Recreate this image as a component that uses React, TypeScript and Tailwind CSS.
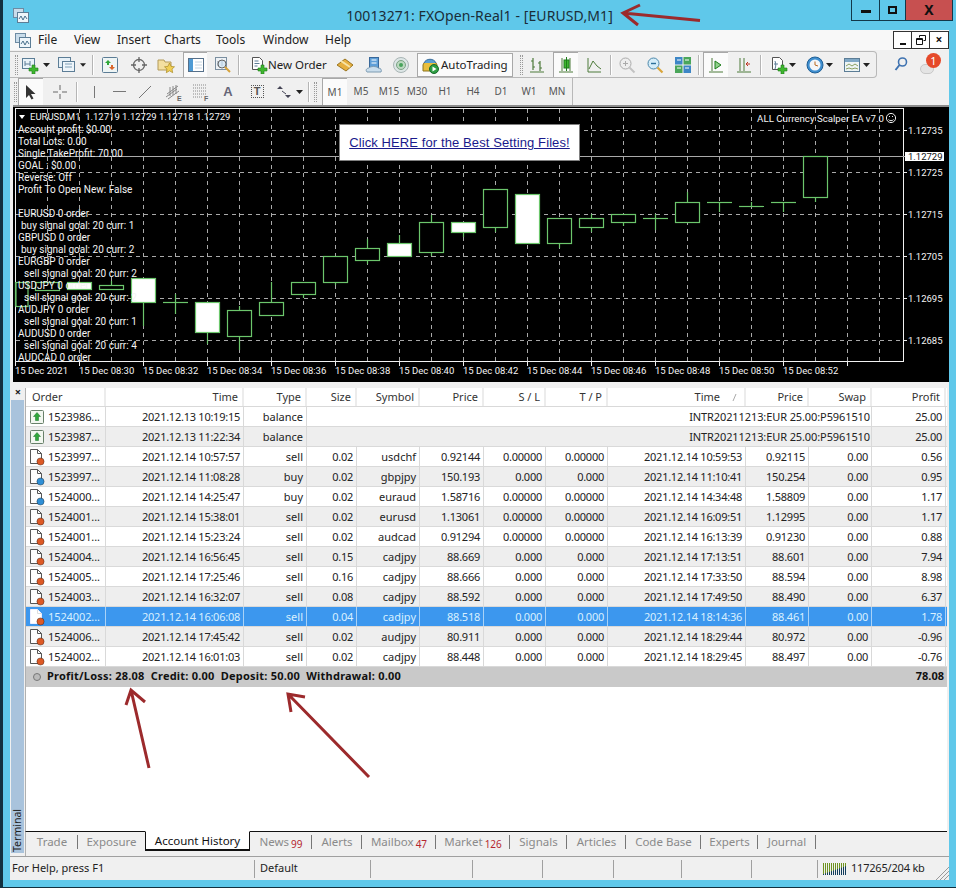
import { ReactNode } from "react";

const full = "grid grid-cols-[80px_138px_63px_50px_63px_64px_62px_62px_138px_63px_63px_74px]";
const balance = "grid grid-cols-[80px_138px_63px_565px_74px]";

const rows = [
  ["1523986...", "2021.12.13 10:19:15", "balance", "INTR20211213:EUR 25.00:P5961510", "25.00"],
  ["1523987...", "2021.12.13 11:22:34", "balance", "INTR20211213:EUR 25.00:P5961510", "25.00"],
  ["1523997...", "2021.12.14 10:57:57", "sell", "0.02", "usdchf", "0.92144", "0.00000", "0.00000", "2021.12.14 10:59:53", "0.92115", "0.00", "0.56"],
  ["1523997...", "2021.12.14 11:08:28", "buy", "0.02", "gbpjpy", "150.193", "0.000", "0.000", "2021.12.14 11:10:41", "150.254", "0.00", "0.95"],
  ["1524000...", "2021.12.14 14:25:47", "buy", "0.02", "euraud", "1.58716", "0.00000", "0.00000", "2021.12.14 14:34:48", "1.58809", "0.00", "1.17"],
  ["1524001...", "2021.12.14 15:38:01", "sell", "0.02", "eurusd", "1.13061", "0.00000", "0.00000", "2021.12.14 16:09:51", "1.12995", "0.00", "1.17"],
  ["1524001...", "2021.12.14 15:23:24", "sell", "0.02", "audcad", "0.91294", "0.00000", "0.00000", "2021.12.14 16:13:39", "0.91230", "0.00", "0.88"],
  ["1524004...", "2021.12.14 16:56:45", "sell", "0.15", "cadjpy", "88.669", "0.000", "0.000", "2021.12.14 17:13:51", "88.601", "0.00", "7.94"],
  ["1524005...", "2021.12.14 17:25:46", "sell", "0.16", "cadjpy", "88.666", "0.000", "0.000", "2021.12.14 17:33:50", "88.594", "0.00", "8.98"],
  ["1524003...", "2021.12.14 16:32:07", "sell", "0.08", "cadjpy", "88.592", "0.000", "0.000", "2021.12.14 17:49:50", "88.490", "0.00", "6.37"],
  ["1524002...", "2021.12.14 16:06:08", "sell", "0.04", "cadjpy", "88.518", "0.000", "0.000", "2021.12.14 18:14:36", "88.461", "0.00", "1.78"],
  ["1524006...", "2021.12.14 17:45:42", "sell", "0.02", "audjpy", "80.911", "0.000", "0.000", "2021.12.14 18:29:44", "80.972", "0.00", "-0.96"],
  ["1524002...", "2021.12.14 16:01:03", "sell", "0.02", "cadjpy", "88.448", "0.000", "0.000", "2021.12.14 18:29:45", "88.497", "0.00", "-0.76"],
];

const headers = ["Order", "Time", "Type", "Size", "Symbol", "Price", "S / L", "T / P", "Time", "Price", "Swap", "Profit"];

// x, body top, body bottom, wick top, wick bottom, white body
const candles: [number, number, number, number, number, boolean][] = [
  [15, 282, 306, 282, 306, false],
  [47, 282, 290, 282, 290, false],
  [79, 282, 289, 282, 289, true],
  [111, 285, 289, 281, 289, false],
  [143, 278, 302, 278, 326, true],
  [175, 302, 302, 294, 314, false],
  [207, 302, 332, 302, 344, true],
  [239, 310, 336, 306, 350, false],
  [271, 302, 315, 282, 315, false],
  [303, 282, 294, 282, 298, false],
  [335, 256, 282, 256, 285, false],
  [367, 248, 260, 239, 264, false],
  [399, 243, 256, 235, 256, true],
  [431, 222, 252, 215, 256, false],
  [463, 222, 232, 222, 237, true],
  [495, 189, 227, 189, 232, false],
  [527, 194, 243, 194, 243, true],
  [559, 218, 243, 218, 248, false],
  [591, 218, 227, 214, 232, false],
  [623, 214, 222, 214, 226, false],
  [655, 218, 218, 214, 230, false],
  [687, 202, 222, 192, 222, false],
  [719, 202, 202, 202, 212, false],
  [751, 206, 206, 202, 206, false],
  [783, 202, 202, 202, 212, false],
  [815, 156, 197, 156, 202, false],
];

const gridX = Array.from({ length: 28 }, (_, i) => 15 + i * 32);
const prices = [
  ["1.12735", 130],
  ["1.12725", 172],
  ["1.12715", 214],
  ["1.12705", 256],
  ["1.12695", 298],
  ["1.12685", 340],
] as const;
const times = ["08:30", "08:32", "08:34", "08:36", "08:38", "08:40", "08:42", "08:44", "08:46", "08:48", "08:50", "08:52"];

const chartLines = [
  ["Account profit: $0.00", "pl-0"],
  ["Total Lots: 0.00", "pl-0"],
  ["Single TakeProfit: 70.00", "pl-0"],
  ["GOAL : $0.00", "pl-0"],
  ["Reverse: Off", "pl-0"],
  ["Profit To Open New: False", "pl-0"],
  ["\u00a0", "pl-0"],
  ["EURUSD 0 order", "pl-0"],
  ["buy signal goal: 20 curr: 1", "pl-[3px]"],
  ["GBPUSD 0 order", "pl-0"],
  ["buy signal goal: 20 curr: 2", "pl-[3px]"],
  ["EURGBP 0 order", "pl-0"],
  ["sell signal goal: 20 curr: 2", "pl-[6px]"],
  ["USDJPY 0 order", "pl-0"],
  ["sell signal goal: 20 curr: 2", "pl-[6px]"],
  ["AUDJPY 0 order", "pl-0"],
  ["sell signal goal: 20 curr: 1", "pl-[6px]"],
  ["AUDUSD 0 order", "pl-0"],
  ["sell signal goal: 20 curr: 4", "pl-[6px]"],
  ["AUDCAD 0 order", "pl-0"],
];

const tabs = [
  ["Trade", "", "w-[52px]"],
  ["Exposure", "", "w-[67px]"],
  ["Account History", "", "w-[105px]"],
  ["News", "99", "w-[62px]"],
  ["Alerts", "", "w-[50px]"],
  ["Mailbox", "47", "w-[74px]"],
  ["Market", "126", "w-[74px]"],
  ["Signals", "", "w-[57px]"],
  ["Articles", "", "w-[59px]"],
  ["Code Base", "", "w-[75px]"],
  ["Experts", "", "w-[57px]"],
  ["Journal", "", "w-[58px]"],
];

function Slot({ w, active, children }: { w: string; active?: boolean; children?: ReactNode }) {
  return (
    <div className={`${w} shrink-0 h-full flex items-center justify-center ${active ? "bg-[#fbfbfb] border-t border-l border-[#a8a8a8]" : ""}`}>
      {children}
    </div>
  );
}

function Ico({ children, s = 18 }: { children: ReactNode; s?: number }) {
  return (
    <svg width={s} height={s} viewBox="0 0 18 18" className="shrink-0">
      {children}
    </svg>
  );
}

function Arrow() {
  return (
    <svg width="7" height="4" viewBox="0 0 7 4">
      <path d="M0 0h7L3.5 4z" fill="#222" />
    </svg>
  );
}

function Sep() {
  return <div className="w-[2px] h-[20px] border-l border-[#b5b5b5] bg-white shrink-0" />;
}

function Grip() {
  return <div className="w-[3px] h-[20px] ml-[3px] border-x border-dotted border-[#999] shrink-0" />;
}

function Plus() {
  return <path d="M11 9h3v3h3v3h-3v3h-3v-3H8v-3h3z" fill="#3fb62f" stroke="#1d7d1a" strokeWidth=".6" />;
}

function AppIcon() {
  return (
    <svg width="16" height="15" viewBox="0 0 16 15" className="shrink-0">
      <rect x="0.5" y="0.5" width="10" height="9" fill="#c9dcea" stroke="#6d8ba3" />
      <rect x="4.5" y="4.5" width="11" height="10" fill="#eef5fa" stroke="#5c7d96" />
      <path d="M6 11l2-3 2 4 2-4 2 3" fill="none" stroke="#49708c" />
    </svg>
  );
}

function DocIcon({ color, light }: { color: string; light?: boolean }) {
  return (
    <svg width="16" height="18" viewBox="0 0 16 18" className="shrink-0">
      <path d="M1.5 1.5h7l4 4v10h-11z" fill={light ? "#fff" : "#fdfdfd"} stroke={light ? "#eef" : "#555"} />
      <path d="M8.5 1.5v4h4" fill="none" stroke={light ? "#ddd" : "#555"} />
      <circle cx="11.5" cy="13.5" r="3.6" fill={color} stroke="#00000055" />
    </svg>
  );
}

function BalanceIcon() {
  return (
    <svg width="14" height="14" viewBox="0 0 14 14" className="shrink-0">
      <rect x=".5" y=".5" width="13" height="13" rx="1" fill="#f2f7f0" stroke="#68806a" />
      <path d="M7 2.5l3.5 4H8.5v4h-3v-4H3.5z" fill="#2fa83a" stroke="#177024" strokeWidth=".5" />
    </svg>
  );
}

function CellText({ children, sel }: { children: ReactNode; sel?: boolean }) {
  const numeric = typeof children === "string" && /^-?\d/.test(children);
  const comment = typeof children === "string" && children.startsWith("INTR");
  return (
    <div
      className={`h-full flex items-center justify-end pt-px whitespace-nowrap overflow-hidden ${comment ? "pr-px tracking-[-0.1px]" : "pr-[3px]"} ${numeric ? "tracking-[-0.25px]" : ""} ${
        sel ? "border-r border-[#a9d2f7]" : "border-r border-[#d9d9d9]"
      }`}
    >
      {children}
    </div>
  );
}

function HeadCell({ children, left }: { children: ReactNode; left?: boolean }) {
  return (
    <div className={`h-full flex items-center whitespace-nowrap overflow-hidden border-r-2 border-[#ececec] ${left ? "pl-[6px]" : "justify-end pr-[4px]"}`}>
      {children}
    </div>
  );
}

function Row({ row, index }: { row: string[]; index: number }) {
  const sel = index === 10;
  const isBalance = row.length === 5;
  const rowBg = sel ? "bg-[#3c97ee] text-[#d9f0ff]" : index % 2 ? "bg-[#eeeeee]" : "bg-white";
  const buy = row[2] === "buy";
  return (
    <div className={`${isBalance ? balance : full} h-[20px] border-b border-[#d9d9d9] shrink-0 ${rowBg}`}>
      <div className={`h-full flex items-center gap-[3px] pl-[3px] whitespace-nowrap border-r ${sel ? "border-[#a9d2f7]" : "border-[#d9d9d9]"}`}>
        {isBalance ? (
          <span className="w-[16px] pl-[1px]">
            <BalanceIcon />
          </span>
        ) : (
          <DocIcon color={buy ? "#2f8fd6" : "#dd5a26"} light={sel} />
        )}
        <span className="pt-px tracking-[-0.1px]">{row[0]}</span>
      </div>
      {row.slice(1).map((c, i) => (
        <CellText key={i} sel={sel}>
          {c}
        </CellText>
      ))}
    </div>
  );
}

function Chart() {
  return (
    <div className="relative h-[277px] bg-[#f0f0f0] pl-[3px] shrink-0">
      <div className="relative h-full bg-black border-t-2 border-[#8c8c8c] overflow-hidden font-['Roboto',sans-serif] text-[10px]">
        <svg width="937" height="277" viewBox="13 105 937 277" className="absolute left-0 -top-[2px]">
          <rect x="15.5" y="108.5" width="888" height="253" fill="none" stroke="#f2f2f2" />
          {gridX.filter((x) => x > 15 && x < 903).map((x) => (
            <line key={x} x1={x + 0.5} x2={x + 0.5} y1="109" y2="361" stroke="#a9a9a9" strokeDasharray="4 4" />
          ))}
          {prices.map(([p, y]) => (
            <g key={p}>
              <line x1="16" x2="903" y1={y + 0.5} y2={y + 0.5} stroke="#a9a9a9" strokeDasharray="4 4" />
              <line x1="903" x2="907" y1={y + 0.5} y2={y + 0.5} stroke="#eee" />
              <text x="908" y={y + 4} fill="#f4f4f4" fontSize="9.5" fontFamily="Roboto, sans-serif">
                {p}
              </text>
            </g>
          ))}
          <line x1="16" x2="905" y1="156.5" y2="156.5" stroke="#a9a9a9" />
          {candles.map(([x, top, bottom, wt, wb, white]) => (
            <g key={x} stroke="#6cc66c" strokeWidth="1.2">
              <line x1={x + 0.5} x2={x + 0.5} y1={wt} y2={wb} />
              {top === bottom ? (
                <line x1={x - 12} x2={x + 13} y1={top + 0.5} y2={top + 0.5} />
              ) : (
                <rect x={Math.max(x - 11.5, 16)} y={top + 0.5} width={x === 15 ? 12 : 24} height={bottom - top} fill={white ? "#fff" : "#000"} />
              )}
            </g>
          ))}
          <rect x="905" y="152" width="39" height="9" fill="#fff" />
          <text x="908" y="160" fill="#111" fontSize="9.5" fontFamily="Roboto, sans-serif">
            1.12729
          </text>
          {gridX.filter((x) => (x - 15) % 64 === 0 && x < 903).map((x) => (
            <line key={x} x1={x + 0.5} x2={x + 0.5} y1="361" y2="366" stroke="#eee" />
          ))}
          <text x="15" y="374" fill="#f4f4f4" fontSize="9.5" fontFamily="Roboto, sans-serif">
            15 Dec 2021
          </text>
          {times.map((t, i) => (
            <text key={t} x={79 + i * 64} y="374" fill="#f4f4f4" fontSize="9.5" fontFamily="Roboto, sans-serif">
              15 Dec {t}
            </text>
          ))}
          <circle cx="891" cy="118" r="4.6" fill="none" stroke="#eee" />
          <path d="M888.5 119.5c1 1.6 4 1.6 5 0M889 116.5h1M892 116.5h1" fill="none" stroke="#eee" />
        </svg>
        <div className="absolute left-[6px] top-[4px] flex items-center gap-[5px] text-[#f4f4f4] text-[9.5px] whitespace-nowrap leading-[12px]">
          <svg width="6" height="4" viewBox="0 0 6 4">
            <path d="M0 0h6L3 4z" fill="#fff" />
          </svg>
          <span>EURUSD,M1&nbsp; 1.12719 1.12729 1.12718 1.12729</span>
        </div>
        <div className="absolute right-[65px] top-[6px] text-[#f4f4f4] text-[9.7px] whitespace-nowrap leading-[12px]">ALL Currency Scalper EA v7.0</div>
        <div className="absolute left-[5px] top-[17px] flex flex-col text-[#f4f4f4] leading-[12px] whitespace-nowrap">
          {chartLines.map(([l, p], i) => (
            <div key={i} className={`h-[12px] ${p}`}>
              {l}
            </div>
          ))}
        </div>
        <div className="absolute left-[326px] top-[17px] w-[241px] h-[37px] bg-white border border-[#808080] flex items-center justify-center">
          <a href="#" className="font-['Liberation_Sans',sans-serif] text-[13px] tracking-[0.1px] text-[#1a1a8c] underline whitespace-nowrap">
            Click HERE for the Best Setting Files!
          </a>
        </div>
      </div>
    </div>
  );
}

function ToolbarTop() {
  return (
    <div className="flex items-end h-[28px] bg-[#f0f0f0] shrink-0">
      <div className="flex items-center h-[27px] w-[867px] border-y border-r border-[#b8b8b8] rounded-r-sm">
        <Slot w="w-[10px]"><Grip /></Slot>
        <Slot w="w-[19px]">
          <Ico><rect x="1.5" y="2.5" width="12" height="10" fill="#e9f3f9" stroke="#5c7d96" /><path d="M4 5v5M4 8h5M9 5v5" stroke="#5c7d96" fill="none" /><Plus /></Ico>
        </Slot>
        <Slot w="w-[14px]"><Arrow /></Slot>
        <Slot w="w-[27px]">
          <Ico><rect x=".5" y="1.5" width="12" height="10" fill="#e6f0f7" stroke="#5c7d96" /><rect x="4.5" y="5.5" width="12" height="10" fill="#eef5fa" stroke="#5c7d96" /><path d="M7 8h7M7 11h7" stroke="#7fa0b8" /></Ico>
        </Slot>
        <Slot w="w-[6px]"><Arrow /></Slot>
        <Slot w="w-[14px]"><Sep /></Slot>
        <Slot w="w-[20px]">
          <Ico><rect x="1.5" y="1.5" width="15" height="15" rx="1" fill="#eef5f5" stroke="#5c7d96" /><path d="M7 4l3 3H8v2H6V7H4z" fill="#2fa83a" /><path d="M11 14l-3-3h2V9h2v2h2z" fill="#d9682d" /></Ico>
        </Slot>
        <Slot w="w-[38px]">
          <Ico><circle cx="9" cy="9" r="5.5" fill="none" stroke="#666" strokeWidth="1.3" /><path d="M9 1v5M9 12v5M1 9h5M12 9h5" stroke="#666" strokeWidth="1.3" /></Ico>
        </Slot>
        <Slot w="w-[16px]">
          <Ico><path d="M1 4h6l1 2h6v8H1z" fill="#f3dfa0" stroke="#b39a58" /><path d="M12.5 7l1.6 3.4 3.4.4-2.5 2.3.7 3.6-3.2-1.9-3.2 1.9.7-3.6-2.5-2.3 3.4-.4z" fill="#f0cf55" stroke="#a98a22" strokeWidth=".7" /></Ico>
        </Slot>
        <Slot w="w-[9px]" />
        <Slot w="w-[24px]" active>
          <Ico><rect x="1.5" y="2.5" width="15" height="13" fill="#fff" stroke="#56708a" /><rect x="2" y="3" width="4" height="12" fill="#4f9bd4" /><path d="M8 6h7M8 9h7M8 12h7" stroke="#c4d4e0" /></Ico>
        </Slot>
        <Slot w="w-[31px]">
          <Ico><rect x="1.5" y="1.5" width="11" height="12" fill="#eef2f6" stroke="#7b8fa0" /><path d="M4 5v5M8 4v6" stroke="#7b8fa0" /><circle cx="8" cy="8" r="4" fill="#cfe4f3" fillOpacity=".7" stroke="#666" /><path d="M11 11l5 5" stroke="#d6a23a" strokeWidth="2" /></Ico>
        </Slot>
        <Sep />
        <Slot w="w-[10px]" />
        <Slot w="w-[18px]">
          <Ico><path d="M2.5 1.5h7l3 3v9h-10z" fill="#fff" stroke="#555" /><path d="M4.5 5h4M4.5 7.5h5M4.5 10h3" stroke="#5c7d96" /><Plus /></Ico>
        </Slot>
        <div className="w-[69px] shrink-0 text-[11.5px] text-[#222] whitespace-nowrap">New Order</div>
        <Slot w="w-[16px]">
          <Ico><path d="M9 3l8 6-7 6-9-6z" fill="#e7b040" stroke="#9a7520" /><path d="M5 5l9 6" stroke="#f7e4a6" strokeWidth="2" /></Ico>
        </Slot>
        <Slot w="w-[12px]" />
        <Slot w="w-[17px]">
          <Ico><rect x="4.5" y="1.5" width="9" height="10" fill="#5f9fd8" stroke="#39689a" /><path d="M6.5 4h5M6.5 7h5" stroke="#fff" /><path d="M2 16c-2-2 0-4 2-4 1-2 8-2 9 0 3 0 4 2 3 4z" fill="#c9ddec" stroke="#7d9bb2" /></Ico>
        </Slot>
        <Slot w="w-[11px]" />
        <Slot w="w-[16px]">
          <Ico><circle cx="9" cy="9" r="7.5" fill="#dde6e6" stroke="#a9b5b5" /><circle cx="9" cy="9" r="4.5" fill="#bcd8c0" stroke="#7ba384" /><circle cx="9" cy="9" r="2" fill="#46a35a" /></Ico>
        </Slot>
        <Slot w="w-[8px]" />
        <div className="w-[96px] shrink-0 h-[24px] bg-[#fbfbfb] border border-[#a8a8a8] flex items-center gap-[2px] pl-[3px] text-[11.5px] text-[#222] whitespace-nowrap">
          <Ico><path d="M2 9c0-5 14-5 14 0v6H2z" fill="#e9bf3d" stroke="#8b7420" /><path d="M3 7c2-5 10-5 12 0" fill="#5a9fd4" stroke="#3a6d99" /><circle cx="13" cy="13" r="4.5" fill="#2f9e44" stroke="#176a2a" /><path d="M11.5 10.5l4 2.5-4 2.5z" fill="#fff" /></Ico>
          <span>AutoTrading</span>
        </div>
        <Slot w="w-[13px]"><Grip /></Slot>
        <Slot w="w-[22px]">
          <Ico><path d="M2 16h14M5 2v12M5 5H3M5 11h2M12 5v10M12 7h-2M12 12h2" stroke="#4d7a3a" strokeWidth="1.2" fill="none" /></Ico>
        </Slot>
        <Slot w="w-[5px]" />
        <Slot w="w-[25px]" active>
          <Ico><path d="M2 16h14M5 2v13M13 2v13" stroke="#4d7a3a" fill="none" /><rect x="7" y="4" width="5" height="8" fill="#3fb62f" stroke="#1d7d1a" /><path d="M9.5 1v14" stroke="#1d7d1a" /></Ico>
        </Slot>
        <Slot w="w-[32px]">
          <Ico><path d="M3 2v14h13" stroke="#4d7a3a" fill="none" /><path d="M4 13l4-8 4 5 4 3" stroke="#4d7a3a" fill="none" /></Ico>
        </Slot>
        <Sep />
        <Slot w="w-[30px]">
          <Ico><circle cx="7.5" cy="7.5" r="5.5" fill="#eee" stroke="#aaa" /><path d="M5 7.5h5M7.5 5v5" stroke="#aaa" /><path d="M11.5 11.5l5 5" stroke="#c2c2c2" strokeWidth="2" /></Ico>
        </Slot>
        <Slot w="w-[26px]">
          <Ico><circle cx="7.5" cy="7.5" r="5.5" fill="#d3ecf8" stroke="#4b87aa" /><path d="M5 7.5h5" stroke="#2a6f99" strokeWidth="1.4" /><path d="M11.5 11.5l5 5" stroke="#d9a53a" strokeWidth="2.2" /></Ico>
        </Slot>
        <Slot w="w-[30px]">
          <Ico><rect x="1" y="1" width="7.5" height="7.5" fill="#3d86c6" /><rect x="9.5" y="1" width="7.5" height="7.5" fill="#4aa65a" /><rect x="1" y="9.5" width="7.5" height="7.5" fill="#4aa65a" /><rect x="9.5" y="9.5" width="7.5" height="7.5" fill="#3d86c6" /><path d="M3 4h4M11 4h4M3 12h4M11 12h4" stroke="#fff" /></Ico>
        </Slot>
        <Sep />
        <Slot w="w-[3px]" />
        <Slot w="w-[25px]" active>
          <Ico><path d="M2 16h14M5 2v13" stroke="#4d7a3a" fill="none" /><path d="M8 5l6 4-6 4z" fill="#8fd08a" stroke="#1d7d1a" /></Ico>
        </Slot>
        <Slot w="w-[32px]">
          <Ico><path d="M2 16h14M5 2v13M9 2v13" stroke="#4d7a3a" fill="none" /><path d="M15 8l-4 0M13 6l-2 2 2 2" stroke="#bb3322" fill="none" /></Ico>
        </Slot>
        <Sep />
        <Slot w="w-[8px]" />
        <Slot w="w-[18px]">
          <Ico><path d="M2.5 1.5h7l3 3v9h-10z" fill="#fff" stroke="#555" /><path d="M5 5c1 3 1 5 0 8M4 8h4" stroke="#5c7d96" fill="none" /><Plus /></Ico>
        </Slot>
        <Slot w="w-[8px]"><Arrow /></Slot>
        <Slot w="w-[10px]" />
        <Slot w="w-[17px]">
          <Ico><circle cx="9" cy="9" r="8" fill="#3f8fd0" stroke="#1f5f95" /><circle cx="9" cy="9" r="5.5" fill="#f4f6f8" /><path d="M9 5.5V9l3 1" stroke="#bb6a22" fill="none" /></Ico>
        </Slot>
        <Slot w="w-[12px]"><Arrow /></Slot>
        <Slot w="w-[8px]" />
        <Slot w="w-[18px]">
          <Ico><rect x="1.5" y="2.5" width="15" height="13" fill="#eef5f5" stroke="#5c7d96" /><rect x="2" y="3" width="14" height="3" fill="#7fa8c6" /><path d="M3 10l3-2 3 2 3-2 3 2M3 13l3-1 3 1 3-1 3 1" stroke="#8aa060" fill="none" /></Ico>
        </Slot>
        <Slot w="w-[10px]"><Arrow /></Slot>
      </div>
      <div className="w-[31px] h-full flex items-center justify-end shrink-0">
        <svg width="14" height="14" viewBox="0 0 14 14">
          <circle cx="8.5" cy="5" r="4" fill="none" stroke="#3e72b0" strokeWidth="1.6" />
          <path d="M5.5 8L1.5 13" stroke="#3e72b0" strokeWidth="2" />
        </svg>
      </div>
      <div className="relative w-[41px] h-full shrink-0">
        <div className="absolute left-[12px] top-[14px] w-[14px] h-[10px] rounded-full bg-[#e4e4e4] border border-[#c8c8c8]" />
        <div className="absolute left-[18px] top-[3px] w-[15px] h-[15px] rounded-full bg-[#e5492a] text-white text-[11px] leading-[15px] text-center">1</div>
      </div>
    </div>
  );
}

function ToolbarBottom() {
  const tfs = ["M1", "M5", "M15", "M30", "H1", "H4", "D1", "W1", "MN"];
  return (
    <div className="flex h-[27px] bg-[#f0f0f0] shrink-0">
      <div className="flex items-center h-full w-[563px] border-r border-[#b8b8b8]">
        <Slot w="w-[8px]"><Grip /></Slot>
        <Slot w="w-[25px]" active>
          <svg width="12" height="16" viewBox="0 0 12 16"><path d="M1 1v13l3-3 2.5 4.5 2-1L6 10h4.5z" fill="#333" /></svg>
        </Slot>
        <Slot w="w-[33px]">
          <Ico><path d="M9 2v5M9 11v5M2 9h5M11 9h5" stroke="#666" /></Ico>
        </Slot>
        <Sep />
        <Slot w="w-[32px]"><div className="w-px h-[12px] bg-[#777]" /></Slot>
        <Slot w="w-[19px]"><div className="w-[13px] h-px bg-[#777]" /></Slot>
        <Slot w="w-[32px]">
          <Ico><path d="M3 15L15 3" stroke="#777" /></Ico>
        </Slot>
        <Slot w="w-[25px]">
          <svg width="18" height="18" viewBox="0 0 18 18"><path d="M2 11L13 3M1 14L12 6M3 16L14 8M5 4v9M8 3v9M11 2v9" stroke="#888" /><text x="12" y="18" fontSize="7" fontWeight="700" fill="#666" fontFamily="Liberation Sans, sans-serif">E</text></svg>
        </Slot>
        <Slot w="w-[29px]">
          <svg width="18" height="18" viewBox="0 0 18 18"><path d="M1 2h14M1 5h14M1 8h14M1 11h14M1 14h9" stroke="#888" strokeDasharray="1 1" /><text x="12" y="18" fontSize="7" fontWeight="700" fill="#666" fontFamily="Liberation Sans, sans-serif">F</text></svg>
        </Slot>
        <Slot w="w-[26px]"><span className="text-[13px] font-bold text-[#667] font-['Liberation_Sans',sans-serif]">A</span></Slot>
        <Slot w="w-[32px]">
          <div className="w-[13px] h-[13px] border border-dotted border-[#555] flex items-center justify-center text-[11px] font-bold text-[#555] font-['Liberation_Sans',sans-serif]">T</div>
        </Slot>
        <Slot w="w-[22px]">
          <svg width="16" height="14" viewBox="0 0 16 14"><path d="M4 1l3 3H1zM12 13l3-3H9z" fill="#445" /><path d="M6 6l4 3" stroke="#445" /></svg>
        </Slot>
        <Slot w="w-[8px]"><Arrow /></Slot>
        <Slot w="w-[5px]" />
        <Sep />
        <Slot w="w-[7px]"><Grip /></Slot>
        <Slot w="w-[5px]" />
        {tfs.map((t, i) => (
          <Slot key={t} w={i === 0 ? "w-[25px]" : "w-[28px]"} active={i === 0}>
            <span className="text-[10px] text-[#555]">{t}</span>
          </Slot>
        ))}
      </div>
    </div>
  );
}

function Terminal() {
  return (
    <div className="flex h-[474px] bg-[#f0f0f0] shrink-0">
      <div className="w-[15px] shrink-0 flex flex-col">
        <div className="h-[18px] flex items-center justify-center pl-[1px] text-[11px] font-bold leading-none text-[#222]">×</div>
        <div className="flex-1 mx-[1px] mb-[3px] bg-[#a9c3dc] flex flex-col justify-end items-center">
          <span className="[writing-mode:vertical-rl] rotate-180 text-[10.5px] leading-[13px] pt-[1px] text-[#222]">Terminal</span>
        </div>
      </div>
      <div className="flex-1 flex flex-col pt-[6px]">
        <div className="flex-1 flex flex-col bg-white border-l border-[#b0b0b0] mr-[2px] min-h-0">
          <div className={`${full} h-[19px] border-b border-[#d9d9d9] text-[#333] shrink-0`}>
            {headers.map((h, i) => (
              <HeadCell key={i} left={i === 0}>
                {h}
                {i === 8 && (
                  <svg width="18" height="9" viewBox="0 0 18 9" className="shrink-0 ml-[2px]">
                    <path d="M11 8l3-7" stroke="#aaa" />
                  </svg>
                )}
              </HeadCell>
            ))}
          </div>
          {rows.map((r, i) => (
            <Row key={i} row={r} index={i} />
          ))}
          <div className="h-[20px] bg-[#c9c9c9] flex items-center font-bold text-[#111] pr-[3px] pb-px shrink-0">
            <span className="w-[8px] h-[8px] ml-[7px] mr-[6px] rounded-full border border-[#777] bg-[#bbb]" />
            <span className="whitespace-pre tracking-[0.22px]">Profit/Loss: 28.08  Credit: 0.00  Deposit: 50.00  Withdrawal: 0.00</span>
            <span className="ml-auto">78.08</span>
          </div>
          <div className="flex-1" />
        </div>
        <div className="flex h-[25px] border-l border-[#b0b0b0] mr-[2px] border-t border-t-[#111] bg-[#f0f0f0] shrink-0">
          {tabs.map(([name, badge, w], i) => {
            const active = name === "Account History";
            return (
              <div
                key={name}
                className={`${w} shrink-0 flex items-center justify-center relative whitespace-nowrap text-[11.5px] ${
                  active ? "h-[20px] -mt-px border border-[#111] border-t-white border-b-2 bg-white text-[#111]" : "h-[20px] text-[#8a8a8a]"
                }`}
              >
                <span>{name}</span>
                {badge && <span className="text-[#b5272f] text-[10px] ml-[2px] mt-[5px]">{badge}</span>}
                {!active && i !== 1 && <span className="absolute right-0 top-[3px] h-[14px] w-px bg-[#777]" />}
              </div>
            );
          })}
        </div>
      </div>
    </div>
  );
}

function StatusBar() {
  const cells = ["w-[245px]", "w-[116px]", "w-[102px]", "w-[70px]", "w-[71px]", "w-[68px]", "w-[70px]", "w-[66px]"];
  const labels = ["For Help, press F1", "Default"];
  return (
    <div className="flex items-center h-[24px] bg-[#f0f0f0] border-t border-[#a0a0a0] text-[#222] text-[11px] shrink-0">
      {cells.map((w, i) => (
        <div key={w} className={`${w} h-[18px] shrink-0 flex items-center border-r border-[#a0a0a0] ${i === 1 ? "pl-[5px]" : "pl-[2px]"} whitespace-nowrap`}>
          {labels[i]}
        </div>
      ))}
      <svg width="24" height="12" viewBox="0 0 24 12" className="ml-[5px] shrink-0">
        {Array.from({ length: 12 }, (_, i) => (
          <g key={i}>
            <rect x={i * 2} y="0" width="1" height="12" fill="#6f9420" />
            <rect x={i * 2} y={11 - i * 0.7} width="1" height={1 + i * 0.7} fill="#123c5c" />
          </g>
        ))}
      </svg>
      <span className="ml-[4px] whitespace-nowrap tracking-[-0.2px]">117265/204 kb</span>
      <svg width="15" height="15" viewBox="0 0 15 15" className="ml-auto self-end shrink-0">
        <path d="M15 2L2 15M15 6L6 15M15 10L10 15" stroke="#999" />
      </svg>
    </div>
  );
}

export default function App() {
  return (
    <div className="relative w-[959px] h-[890px] overflow-hidden bg-white text-[11px] text-[#222] font-['Noto_Sans',sans-serif]">
      <div className="w-[956px] h-[888px] bg-[#5fc8ea] border-l-[3px] border-b border-[#12303f] flex flex-col">
        <div className="relative h-[30px] flex items-center justify-center shrink-0">
          <div className="absolute left-[10px] top-[8px]">
            <AppIcon />
          </div>
          <span className="text-[14px] tracking-[0.1px] text-[#1a2d38]">10013271: FXOpen-Real1 - [EURUSD,M1]</span>
          <div className="absolute right-[3px] top-0 flex h-[21px] border-x border-b border-[#12384a]">
            <div className="w-[28px] flex items-center justify-center border-r border-[#12384a]">
              <div className="w-[10px] h-[3px] bg-[#111] mt-[3px]" />
            </div>
            <div className="w-[26px] flex items-center justify-center border-r border-[#12384a]">
              <div className="w-[9px] h-[8px] border-2 border-[#111]" />
            </div>
            <div className="w-[46px] bg-[#c75050] flex items-center justify-center text-[14px] font-bold text-[#111] leading-none">X</div>
          </div>
        </div>
        <div className="ml-[7px] w-[939px] flex flex-col">
          <div className="relative h-[20px] bg-[#f8f8f8] flex items-center text-[12px] text-[#222] shrink-0">
            <div className="w-[28px] pl-[5px]">
              <AppIcon />
            </div>
            <div className="w-[36px]">File</div>
            <div className="w-[43px]">View</div>
            <div className="w-[47px]">Insert</div>
            <div className="w-[52px]">Charts</div>
            <div className="w-[47px]">Tools</div>
            <div className="w-[62px]">Window</div>
            <div>Help</div>
            <div className="absolute right-0 top-[1px] flex h-[18px] border border-[#333] bg-white">
              <div className="w-[18px] flex items-end justify-center pb-[3px] border-r border-[#333]">
                <div className="w-[6px] h-[2px] bg-[#111]" />
              </div>
              <div className="w-[18px] flex items-center justify-center border-r border-[#333]">
                <svg width="10" height="10" viewBox="0 0 10 10">
                  <path d="M3.5 2.5V.5h6v5h-2M.5 3.5h6v6h-6zM.5 4.5h6" fill="none" stroke="#111" />
                </svg>
              </div>
              <div className="w-[18px] flex items-center justify-center text-[12px] font-bold text-[#111] leading-none">×</div>
            </div>
          </div>
          <ToolbarTop />
          <ToolbarBottom />
          <Chart />
          <Terminal />
          <StatusBar />
        </div>
      </div>
      <svg width="959" height="890" viewBox="0 0 959 890" className="absolute left-0 top-0 pointer-events-none">
        <g stroke="#9c2a2c" strokeWidth="3" fill="none">
          <path d="M700 20.5L623 13M640 5L623 13L638 25" />
          <path d="M149 768L131 690M126 705L131 690L145 702" />
          <path d="M369 777L288 694M291 712L288 694L305 697" />
        </g>
      </svg>
    </div>
  );
}
